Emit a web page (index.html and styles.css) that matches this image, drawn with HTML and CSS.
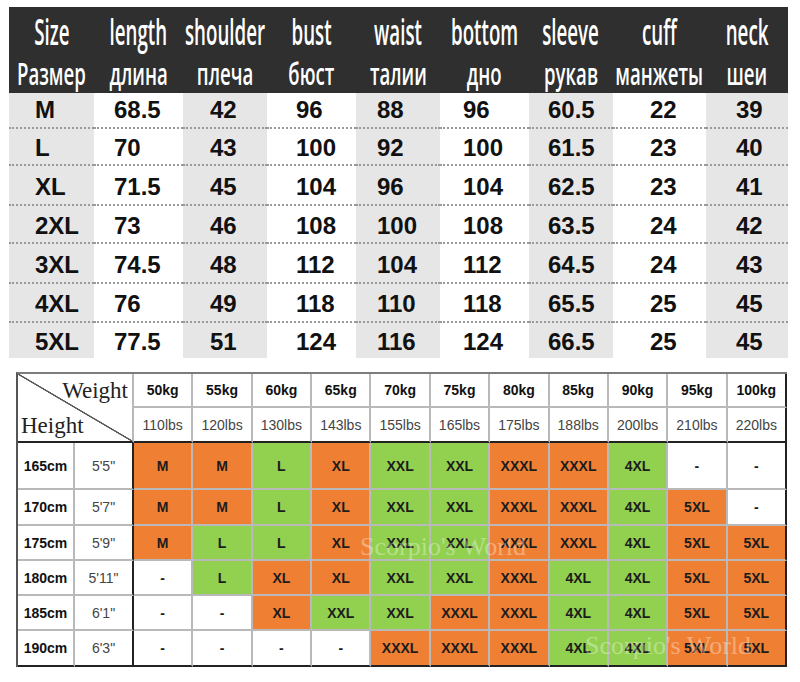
FILE: index.html
```html
<!DOCTYPE html>
<html lang="ru">
<head>
<meta charset="utf-8">
<title>Size chart</title>
<link rel="stylesheet" href="styles.css">
</head>
<body>
<div class="sizes">
  <div class="srow head">
    <div class="h"><div class="l1"><span>Size</span></div><div class="l2"><span>Размер</span></div></div>
    <div class="h"><div class="l1"><span>length</span></div><div class="l2"><span>длина</span></div></div>
    <div class="h"><div class="l1"><span>shoulder</span></div><div class="l2"><span>плеча</span></div></div>
    <div class="h"><div class="l1"><span>bust</span></div><div class="l2"><span>бюст</span></div></div>
    <div class="h"><div class="l1"><span>waist</span></div><div class="l2"><span>талии</span></div></div>
    <div class="h"><div class="l1"><span>bottom</span></div><div class="l2"><span>дно</span></div></div>
    <div class="h"><div class="l1"><span>sleeve</span></div><div class="l2"><span>рукав</span></div></div>
    <div class="h"><div class="l1"><span>cuff</span></div><div class="l2"><span>манжеты</span></div></div>
    <div class="h"><div class="l1"><span>neck</span></div><div class="l2"><span>шеи</span></div></div>
  </div>
  <div class="srow r1">
    <div class="c c1 g">M</div><div class="c c2">68.5</div><div class="c c3 g">42</div><div class="c c4">96</div><div class="c c5 g">88</div><div class="c c6">96</div><div class="c c7 g">60.5</div><div class="c c8">22</div><div class="c c9 g">39</div>
  </div>
  <div class="srow r2 dash">
    <div class="c c1 g">L</div><div class="c c2">70</div><div class="c c3 g">43</div><div class="c c4">100</div><div class="c c5 g">92</div><div class="c c6">100</div><div class="c c7 g">61.5</div><div class="c c8">23</div><div class="c c9 g">40</div>
  </div>
  <div class="srow r3 dash">
    <div class="c c1 g">XL</div><div class="c c2">71.5</div><div class="c c3 g">45</div><div class="c c4">104</div><div class="c c5 g">96</div><div class="c c6">104</div><div class="c c7 g">62.5</div><div class="c c8">23</div><div class="c c9 g">41</div>
  </div>
  <div class="srow r4 dash">
    <div class="c c1 g">2XL</div><div class="c c2">73</div><div class="c c3 g">46</div><div class="c c4">108</div><div class="c c5 g">100</div><div class="c c6">108</div><div class="c c7 g">63.5</div><div class="c c8">24</div><div class="c c9 g">42</div>
  </div>
  <div class="srow r5 dash">
    <div class="c c1 g">3XL</div><div class="c c2">74.5</div><div class="c c3 g">48</div><div class="c c4">112</div><div class="c c5 g">104</div><div class="c c6">112</div><div class="c c7 g">64.5</div><div class="c c8">24</div><div class="c c9 g">43</div>
  </div>
  <div class="srow r6 dash">
    <div class="c c1 g">4XL</div><div class="c c2">76</div><div class="c c3 g">49</div><div class="c c4">118</div><div class="c c5 g">110</div><div class="c c6">118</div><div class="c c7 g">65.5</div><div class="c c8">25</div><div class="c c9 g">45</div>
  </div>
  <div class="srow r7 dash">
    <div class="c c1 g">5XL</div><div class="c c2">77.5</div><div class="c c3 g">51</div><div class="c c4">124</div><div class="c c5 g">116</div><div class="c c6">124</div><div class="c c7 g">66.5</div><div class="c c8">25</div><div class="c c9 g">45</div>
  </div>
</div>

<div class="chart">
  <div class="cell diag"><span class="wt">Weight</span><span class="ht">Height</span></div>
  <div class="cell kg">50kg</div><div class="cell kg">55kg</div><div class="cell kg">60kg</div><div class="cell kg">65kg</div><div class="cell kg">70kg</div><div class="cell kg">75kg</div><div class="cell kg">80kg</div><div class="cell kg">85kg</div><div class="cell kg">90kg</div><div class="cell kg">95kg</div><div class="cell kg e">100kg</div>
  <div class="cell lb">110lbs</div><div class="cell lb">120lbs</div><div class="cell lb">130lbs</div><div class="cell lb">143lbs</div><div class="cell lb">155lbs</div><div class="cell lb">165lbs</div><div class="cell lb">175lbs</div><div class="cell lb">188lbs</div><div class="cell lb">200lbs</div><div class="cell lb">210lbs</div><div class="cell lb e">220lbs</div>

  <div class="cell cm">165cm</div><div class="cell ft">5'5"</div>
  <div class="cell o">M</div><div class="cell o">M</div><div class="cell gr">L</div><div class="cell o">XL</div><div class="cell gr">XXL</div><div class="cell gr">XXL</div><div class="cell o">XXXL</div><div class="cell o">XXXL</div><div class="cell gr">4XL</div><div class="cell">-</div><div class="cell e">-</div>

  <div class="cell cm">170cm</div><div class="cell ft">5'7"</div>
  <div class="cell o">M</div><div class="cell o">M</div><div class="cell gr">L</div><div class="cell o">XL</div><div class="cell gr">XXL</div><div class="cell gr">XXL</div><div class="cell o">XXXL</div><div class="cell o">XXXL</div><div class="cell gr">4XL</div><div class="cell o">5XL</div><div class="cell e">-</div>

  <div class="cell cm">175cm</div><div class="cell ft">5'9"</div>
  <div class="cell o">M</div><div class="cell gr">L</div><div class="cell gr">L</div><div class="cell o">XL</div><div class="cell gr">XXL</div><div class="cell gr">XXL</div><div class="cell o">XXXL</div><div class="cell o">XXXL</div><div class="cell gr">4XL</div><div class="cell o">5XL</div><div class="cell o e">5XL</div>

  <div class="cell cm">180cm</div><div class="cell ft">5'11"</div>
  <div class="cell">-</div><div class="cell gr">L</div><div class="cell o">XL</div><div class="cell o">XL</div><div class="cell gr">XXL</div><div class="cell gr">XXL</div><div class="cell o">XXXL</div><div class="cell gr">4XL</div><div class="cell gr">4XL</div><div class="cell o">5XL</div><div class="cell o e">5XL</div>

  <div class="cell cm">185cm</div><div class="cell ft">6'1"</div>
  <div class="cell">-</div><div class="cell">-</div><div class="cell o">XL</div><div class="cell gr">XXL</div><div class="cell gr">XXL</div><div class="cell o">XXXL</div><div class="cell o">XXXL</div><div class="cell gr">4XL</div><div class="cell gr">4XL</div><div class="cell o">5XL</div><div class="cell o e">5XL</div>

  <div class="cell cm b">190cm</div><div class="cell ft b">6'3"</div>
  <div class="cell b">-</div><div class="cell b">-</div><div class="cell b">-</div><div class="cell b">-</div><div class="cell o b">XXXL</div><div class="cell o b">XXXL</div><div class="cell o b">XXXL</div><div class="cell gr b">4XL</div><div class="cell gr b">4XL</div><div class="cell o b">5XL</div><div class="cell o b e">5XL</div>

  <span class="wm wm1">Scorpio's World</span>
  <span class="wm wm2">Scorpio's World</span>
</div>
</body>
</html>
```

FILE: styles.css
```css
html, body {
  margin: 0;
  padding: 0;
  background: #ffffff;
}

body {
  width: 800px;
  height: 682px;
  overflow: hidden;
  font-family: "Liberation Sans", Arial, sans-serif;
}

/* ---------- top measurement table ---------- */
.sizes {
  margin: 7px 0 0 9px;
  width: 779px;
}

.srow {
  display: grid;
  grid-template-columns: 85px 89px 84px 89px 84px 89px 84px 93px 82px;
}

.head {
  height: 86px;
  background: #2f2f2f;
  color: #ffffff;
  box-sizing: border-box;
  padding-top: 4px;
  font-family: "Open Sans", "Liberation Sans", sans-serif;
  font-weight: 600;
}

.h {
  display: flex;
  flex-direction: column;
  min-width: 0;
}

.h .l1,
.h .l2 {
  display: flex;
  justify-content: center;
  white-space: nowrap;
}

.h .l1 {
  height: 41px;
  line-height: 41px;
  font-size: 36px;
}

.h .l2 {
  height: 42px;
  line-height: 42px;
  font-size: 31px;
}

.h span {
  display: block;
  flex: none;
}

.h .l1 span {
  transform: scaleX(0.52);
}

.h .l2 span {
  transform: scaleX(0.6);
}

.r1 { height: 34px; }
.r2 { height: 37px; }
.r3 { height: 40px; }
.r4 { height: 38px; }
.r5 { height: 40px; }
.r6 { height: 39px; }
.r7 { height: 37px; }

.c {
  display: flex;
  align-items: center;
  box-sizing: border-box;
  font: bold 24px/1 "Liberation Sans", Arial, sans-serif;
  color: #111111;
}

.dash .c {
  border-top: 2px dotted #9a9a9a;
  padding-top: 3px;
}

.g {
  background: #e6e6e6;
}

.c1 { padding-left: 26px; }
.c2 { padding-left: 20px; }
.c3 { padding-left: 27px; }
.c4 { padding-left: 29px; }
.c5 { padding-left: 21px; }
.c6 { padding-left: 23px; }
.c7 { padding-left: 19px; }
.c8 { padding-left: 37px; }
.c9 { padding-left: 30px; }

/* ---------- weight / height chart ---------- */
.chart {
  position: relative;
  display: grid;
  width: 771px;
  box-sizing: border-box;
  margin: 14px 0 0 16px;
  border-top: 2px solid #7c7c7c;
  border-left: 2px solid #555555;
  grid-template-columns: 57px 59px repeat(11, 1fr);
  grid-template-rows: 34px 35px 47px 36px 35px 35px 35px 36px;
}

.cell {
  display: flex;
  align-items: center;
  justify-content: center;
  box-sizing: border-box;
  border-right: 2px solid #b9b9b9;
  border-bottom: 2px solid #b9b9b9;
  background: #ffffff;
  font: bold 14px/1 "Liberation Sans", Arial, sans-serif;
  color: #1c1c1c;
  white-space: nowrap;
}

.diag {
  grid-column: 1 / 3;
  grid-row: 1 / 3;
  flex-direction: column;
  align-items: stretch;
  justify-content: space-between;
  padding: 5px 4px 4px 3px;
  border-bottom-color: #222222;
  background: linear-gradient(to top right,
      transparent calc(50% - 1px),
      #5a5a5a calc(50% - 0.5px),
      #5a5a5a calc(50% + 0.5px),
      transparent calc(50% + 1px));
  font: 23px/1 "Liberation Serif", "Times New Roman", serif;
  color: #222222;
}

.diag .wt {
  align-self: flex-end;
}

.diag .ht {
  align-self: flex-start;
}

.kg {
  color: #111111;
}

.lb {
  font-weight: normal;
  color: #444444;
  border-bottom-color: #222222;
}

.cm {
  color: #111111;
}

.ft {
  font-weight: normal;
  color: #444444;
  border-right-color: #222222;
}

.o {
  background: #ef7f33;
}

.gr {
  background: #92d050;
}

.e {
  border-right-color: #222222;
}

.b {
  border-bottom-color: #222222;
}

.wm {
  position: absolute;
  font: 26px/1 "Liberation Serif", "Times New Roman", serif;
  color: rgba(255, 255, 255, 0.35);
  white-space: nowrap;
  pointer-events: none;
}

.wm1 {
  left: 342px;
  top: 160px;
}

.wm2 {
  left: 567px;
  top: 259px;
}
```
